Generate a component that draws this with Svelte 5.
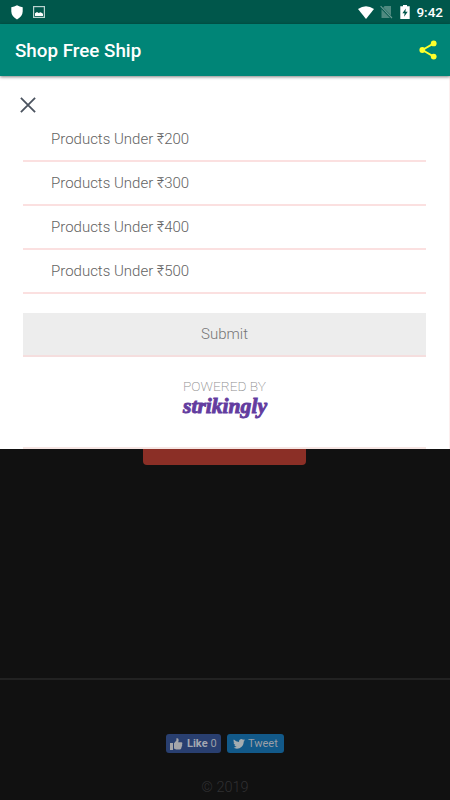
<script lang="ts">
  const products = [200, 300, 400, 500];
  let shares = 0;
</script>

<div class="screen">
  <div class="status">
    <div class="left">
      <svg width="12" height="15" viewBox="0 0 12 15">
        <path d="M6 .3Q8.7 2 11.7 2.3V6.5Q11.5 11.5 6 14.4Q.5 11.5.3 6.5V2.3Q3.3 2 6 .3Z" fill="#fff" />
      </svg>
      <svg width="12" height="12" viewBox="0 0 12 12">
        <rect x=".6" y=".6" width="10.8" height="10.8" fill="none" stroke="#b9d2ce" stroke-width="1.2" />
        <path d="M2 9.9V7.2L4 5.9L5.6 7.1L7.7 6.2L10 7.7V9.9Z" fill="#fff" />
      </svg>
    </div>
    <div class="right">
      <svg class="wifi" width="16" height="13" viewBox="0 0 16 13">
        <path d="M0 3Q8-2.6 16 3L8 12.9Z" fill="#fff" />
      </svg>
      <svg class="sim" width="13" height="14" viewBox="0 0 13 14">
        <path d="M4.6 1H11V10.5L3.2 2.5ZM1.5 4.2L10 13H1.5Z" fill="#4f8a80" />
        <path d="M.6 1.2L12 13" stroke="#6a9c94" stroke-width="1.1" />
      </svg>
      <svg class="battery" width="10" height="14" viewBox="0 0 10 14">
        <path d="M3 0H7V1.3H9.7V14H.3V1.3H3Z" fill="#fff" />
        <path d="M5.8 3.4L2.4 8.2H4.6L4.1 11.8L7.7 6.8H5.4Z" fill="#00574b" />
      </svg>
      <span class="time">9:42</span>
    </div>
  </div>

  <header>
    <h1>Shop Free Ship</h1>
    <svg width="18" height="20" viewBox="0 0 18 20">
      <path d="M14.8 3.4L3.4 10L14.8 16.6" fill="none" stroke="#ffff2b" stroke-width="1.8" />
      <circle cx="14.7" cy="3.4" r="2.9" fill="#ffff2b" />
      <circle cx="3.3" cy="10" r="2.9" fill="#ffff2b" />
      <circle cx="14.7" cy="16.6" r="2.9" fill="#ffff2b" />
    </svg>
  </header>

  <main>
    <svg class="close" width="16" height="16" viewBox="0 0 16 16">
      <path d="M.9 .9L15.100 15.100M15.100 .9L.9 15.100" stroke="#4b535f" stroke-width="1.8" />
    </svg>
    <ul>
      {#each products as price}
        <li>Products Under ₹{price}</li>
      {/each}
    </ul>
    <button class="submit">Submit</button>
    <svg class="brand" width="90" height="44" viewBox="0 0 90 44">
      <text class="powered" x="3" y="14" textLength="83" lengthAdjust="spacingAndGlyphs">POWERED BY</text>
      <text class="logo" x="3" y="35.500" textLength="84" lengthAdjust="spacingAndGlyphs">strikingly</text>
    </svg>
    <div class="end"></div>
  </main>

  <div class="page">
    <div class="red"></div>
  </div>

  <footer>
    <div class="social">
      <div class="like">
        <svg width="13" height="12" viewBox="0 0 13 12">
          <path d="M0 5H3V12H0ZM4 5.2L6.4 2.5V.3Q8.9-.4 8.6 2.5L8.2 4.2H11.3Q12.9 4.5 12.1 6L12.2 7.5L11.6 9L11.2 10.5Q10.8 11.4 9.7 11.4H6L4 10.5Z" fill="#a5a5a9" />
        </svg>
        <b>Like</b><span>{shares}</span>
      </div>
      <div class="tweet">
        <svg width="12" height="10" viewBox="0 0 24 20">
          <path d="M24 2.4Q22.7 3 21.2 3.2Q22.8 2.1 23.3.5Q21.8 1.4 20.1 1.7C17-1.5 11.7.8 12 5.8Q5.9 5.5 1.7.9C.4 3.2 1 6 3.2 7.5L1 6.900Q1.100 10.700 4.900 11.700L2.700 11.800Q3.800 15 7.300 15.200Q4.100 17.700 0 17.200C9.500 23 21.700 17.200 21.500 4.900Q22.900 3.900 24 2.400Z" fill="#a4acb0" />
        </svg>
        <span>Tweet</span>
      </div>
    </div>
    <p>© 2019</p>
  </footer>
</div>

<style>
  :global(body) {
    margin: 0;
    background: #111;
  }

  .screen {
    display: flex;
    flex-direction: column;
    width: 450px;
    height: 800px;
    overflow: hidden;
    background: #111;
    font-family: Roboto, "Noto Sans", sans-serif;
  }

  .status {
    display: flex;
    justify-content: space-between;
    height: 24px;
    box-sizing: border-box;
    padding: 0 7px 0 11px;
    background: #00574b;
  }

  .left,
  .right {
    display: flex;
    align-items: center;
  }

  .left {
    gap: 10px;
  }

  .sim {
    margin-left: 6px;
  }

  .battery {
    margin-left: 7px;
  }

  .time {
    margin-left: 6px;
    color: #fff;
    font-size: 13.5px;
    font-weight: 500;
    line-height: 24px;
  }

  header {
    display: flex;
    align-items: center;
    justify-content: space-between;
    height: 52px;
    box-sizing: border-box;
    padding: 0 13px 0 15px;
    background: #008577;
    box-shadow: 0 1px 3px rgba(0, 0, 0, 0.5);
    z-index: 1;
  }

  h1 {
    margin: 1px 0 0;
    color: #fff;
    font-size: 18.8px;
    font-weight: 500;
  }

  main {
    display: flex;
    flex-direction: column;
    height: 373px;
    box-sizing: border-box;
    padding: 21px 23px 0;
    border-right: 1px solid #fdeeee;
    background: #fff;
  }

  .close {
    margin-left: -3px;
  }

  ul {
    margin: 5px 0 0;
    padding: 0;
    list-style: none;
  }

  li {
    height: 44px;
    box-sizing: border-box;
    padding-left: 28px;
    border-bottom: 2px solid #fbe0e0;
    color: #636363;
    font-size: 15px;
    font-weight: 300;
    line-height: 42px;
  }

  .submit {
    height: 44px;
    box-sizing: border-box;
    flex: none;
    margin: 19px 0 0;
    padding: 0;
    border: 0;
    border-bottom: 2px solid #f5dede;
    background: #ededed;
    color: #757575;
    font-family: inherit;
    font-size: 15px;
    font-weight: 300;
  }

  .brand {
    align-self: center;
    margin-top: 20px;
  }

  .powered {
    fill: #8e8e8e;
    font-size: 12.5px;
    font-weight: 200;
  }

  .logo {
    fill: #633c9f;
    stroke: #633c9f;
    stroke-width: 0.9px;
    font-family: "Liberation Serif", serif;
    font-size: 21px;
    font-weight: bold;
    font-style: italic;
  }

  .end {
    width: 403px;
    height: 2px;
    margin-top: auto;
    background: #f5e5e3;
  }

  .page {
    height: 229px;
    border-bottom: 2px solid #222;
  }

  .red {
    width: 163px;
    height: 16px;
    margin-left: 143px;
    border-radius: 0 0 4px 4px;
    background: #8b2f26;
  }

  footer {
    display: flex;
    flex-direction: column;
    align-items: center;
    padding-top: 54px;
  }

  .social {
    display: flex;
    gap: 6px;
  }

  .like,
  .tweet {
    display: flex;
    align-items: center;
    height: 19px;
    box-sizing: border-box;
    border-radius: 3px;
    color: #9b9fa7;
    font-size: 11px;
  }

  .like {
    width: 55px;
    padding-left: 4px;
    background: #293f70;
  }

  .like b {
    margin: 0 3px 0 4px;
    color: #a3a8b2;
  }

  .tweet {
    width: 57px;
    padding-left: 6px;
    gap: 4px;
    background: #125989;
  }

  .tweet span {
    margin: -1px 0 0 -1px;
  }

  p {
    margin: 25px 0 0;
    color: #303032;
    font-size: 14.5px;
    font-weight: 300;
    line-height: 20px;
  }
</style>
